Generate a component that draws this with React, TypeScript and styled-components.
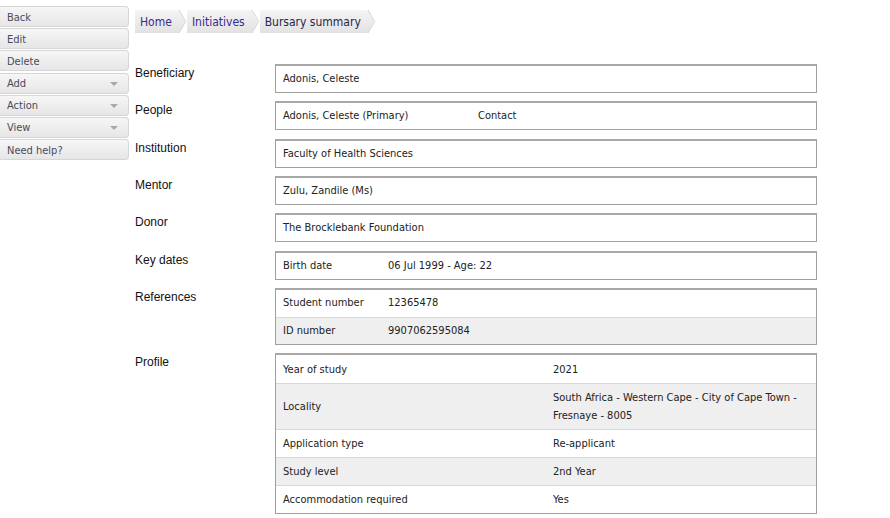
import React from "react";
import styled, { createGlobalStyle } from "styled-components";

const Global = createGlobalStyle`
  html, body { margin: 0; padding: 0; background: #fff; }
  body { font-family: "DejaVu Sans", Verdana, sans-serif; }
`;

const Page = styled.div`
  display: flex;
  align-items: flex-start;
  width: 890px;
  min-height: 518px;
`;

const Sidebar = styled.nav`
  display: flex;
  flex-direction: column;
  width: 129px;
  margin-top: 6px;
  flex-shrink: 0;
`;

const SideButton = styled.div`
  display: flex;
  align-items: center;
  justify-content: space-between;
  height: 21px;
  box-sizing: border-box;
  padding: 1px 10px 0 7px;
  margin-bottom: 1.2px;
  border: 1px solid #d6d6d6;
  border-left: none;
  border-radius: 0 4px 4px 0;
  background: linear-gradient(#f6f6f6, #e6e6e6);
  color: #4a4a5c;
  font-family: Tahoma, "DejaVu Sans Condensed", "DejaVu Sans", sans-serif;
  font-size: 11px;
`;

const Caret = styled.span`
  width: 0;
  height: 0;
  border-left: 4px solid transparent;
  border-right: 4px solid transparent;
  border-top: 4px solid #a8a8a8;
`;

const Main = styled.main`
  display: flex;
  flex-direction: column;
  margin-left: 6px;
  padding-top: 10px;
`;

const Crumbs = styled.div`
  display: flex;
  align-items: stretch;
  height: 23px;
  align-self: flex-start;
`;

const Crumb = styled.div`
  display: flex;
  align-items: center;
  background: linear-gradient(#f4f4f4, #e2e2e2);
  padding-left: 5px;
  font-family: Tahoma, "DejaVu Sans Condensed", "DejaVu Sans", sans-serif;
  font-size: 12px;
`;

const CrumbText = styled.span<{ $link?: boolean }>`
  color: ${(p) => (p.$link ? "#3b2a8f" : "#26264a")};
  padding-right: 4px;
`;

const Chevron = () => (
  <svg width="11" height="23" viewBox="0 0 11 23" style={{ display: "block" }}>
    <defs>
      <linearGradient id="cg" x1="0" y1="0" x2="0" y2="1">
        <stop offset="0" stopColor="#f4f4f4" />
        <stop offset="1" stopColor="#e2e2e2" />
      </linearGradient>
    </defs>
    <polygon points="0,0 3,0 10,11.5 3,23 0,23" fill="url(#cg)" />
    <polyline points="3,0 10,11.5 3,23" fill="none" stroke="#d4d4d4" strokeWidth="1" />
    <polyline points="4.5,0 11,11.5 4.5,23" fill="none" stroke="#fff" strokeWidth="1.2" />
  </svg>
);

const Fields = styled.div`
  display: flex;
  flex-direction: column;
  gap: 8.33px;
  margin-top: 31px;
`;

const FieldRow = styled.div`
  display: grid;
  grid-template-columns: 140px 542px;
  align-items: start;
`;

const Label = styled.div`
  font-family: "Liberation Sans", Arial, sans-serif;
  font-size: 12px;
  color: #111;
  padding-top: 2px;
`;

const Box = styled.div`
  border: 1px solid #a0a0a0;
  border-top: 2px solid #a8a8a8;
  box-sizing: border-box;
  font-family: Tahoma, "DejaVu Sans Condensed", "DejaVu Sans", sans-serif;
  font-size: 11px;
  color: #222;
`;

const Line = styled.div<{ $shade?: boolean; $cols?: string; $h?: number }>`
  display: grid;
  grid-template-columns: ${(p) => p.$cols || "1fr"};
  align-items: center;
  min-height: ${(p) => p.$h ?? 26}px;
  padding: ${(p) => ((p.$h ?? 26) >= 28 ? 5 : 4)}px 7px 4px;
  box-sizing: border-box;
  line-height: 18px;
  background: ${(p) => (p.$shade ? "#efefef" : "#fff")};
  & + & { border-top: 1px solid #d8d8d8; }
`;

const Cell = styled.span``;

const profile: [string, string][] = [
  ["Year of study", "2021"],
  ["Locality", "South Africa - Western Cape - City of Cape Town - Fresnaye - 8005"],
  ["Application type", "Re-applicant"],
  ["Study level", "2nd Year"],
  ["Accommodation required", "Yes"],
];

export default function App() {
  return (
    <>
      <Global />
      <Page>
        <Sidebar>
          <SideButton>Back</SideButton>
          <SideButton>Edit</SideButton>
          <SideButton>Delete</SideButton>
          <SideButton>Add<Caret /></SideButton>
          <SideButton>Action<Caret /></SideButton>
          <SideButton>View<Caret /></SideButton>
          <SideButton>Need help?</SideButton>
        </Sidebar>
        <Main>
          <Crumbs>
            <Crumb><CrumbText $link>Home</CrumbText></Crumb>
            <Chevron />
            <Crumb><CrumbText $link>Initiatives</CrumbText></Crumb>
            <Chevron />
            <Crumb><CrumbText>Bursary summary</CrumbText></Crumb>
            <Chevron />
          </Crumbs>
          <Fields>
            <FieldRow>
              <Label>Beneficiary</Label>
              <Box><Line>Adonis, Celeste</Line></Box>
            </FieldRow>
            <FieldRow>
              <Label>People</Label>
              <Box>
                <Line $cols="195px 1fr"><Cell>Adonis, Celeste (Primary)</Cell><Cell>Contact</Cell></Line>
              </Box>
            </FieldRow>
            <FieldRow>
              <Label>Institution</Label>
              <Box><Line>Faculty of Health Sciences</Line></Box>
            </FieldRow>
            <FieldRow>
              <Label>Mentor</Label>
              <Box><Line>Zulu, Zandile (Ms)</Line></Box>
            </FieldRow>
            <FieldRow>
              <Label>Donor</Label>
              <Box><Line>The Brocklebank Foundation</Line></Box>
            </FieldRow>
            <FieldRow>
              <Label>Key dates</Label>
              <Box>
                <Line $cols="105px 1fr"><Cell>Birth date</Cell><Cell>06 Jul 1999 - Age: 22</Cell></Line>
              </Box>
            </FieldRow>
            <FieldRow>
              <Label>References</Label>
              <Box>
                <Line $h={27} $cols="105px 1fr"><Cell>Student number</Cell><Cell>12365478</Cell></Line>
                <Line $h={27} $shade $cols="105px 1fr"><Cell>ID number</Cell><Cell>9907062595084</Cell></Line>
              </Box>
            </FieldRow>
            <FieldRow>
              <Label>Profile</Label>
              <Box>
                {profile.map(([k, v], i) => (
                  <Line key={k} $h={28} $shade={i % 2 === 1} $cols="270px 1fr">
                    <Cell>{k}</Cell>
                    <Cell>{v}</Cell>
                  </Line>
                ))}
              </Box>
            </FieldRow>
          </Fields>
        </Main>
      </Page>
    </>
  );
}
